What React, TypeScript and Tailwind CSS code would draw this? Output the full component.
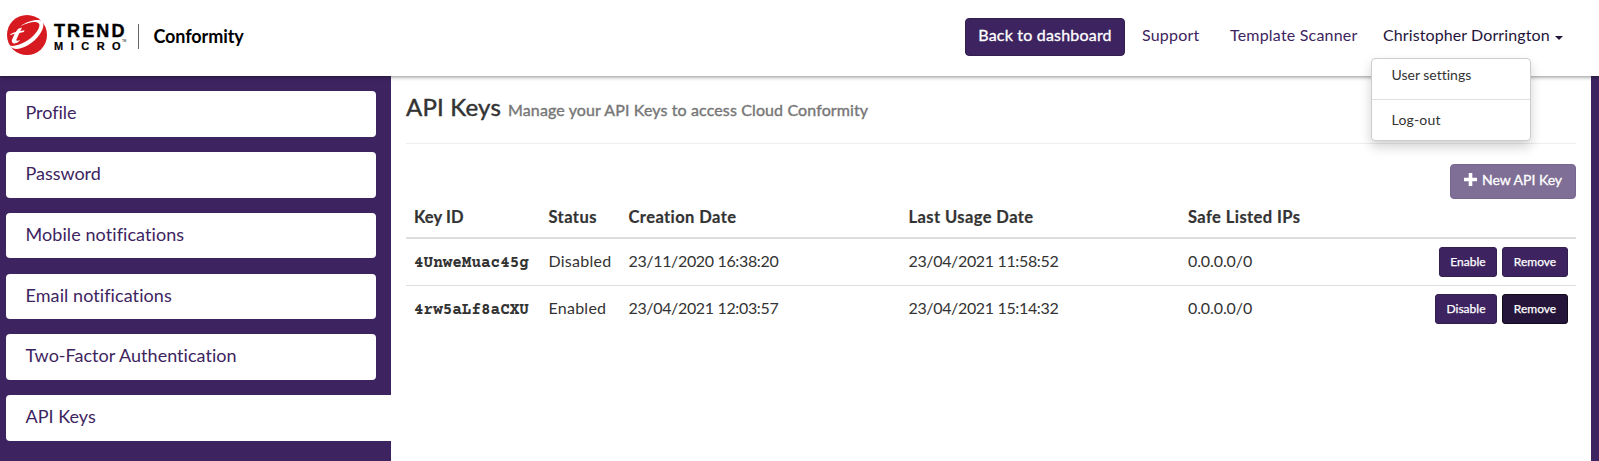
import type { ReactNode } from "react";
import clsx from "clsx";

type NavItem = { label: string; text: string };

const navItems: NavItem[] = [
  { label: "Profile", text: "tracking-[-0.05px]" },
  { label: "Password", text: "tracking-[-0.03px]" },
  { label: "Mobile notifications", text: "tracking-[0.08px]" },
  { label: "Email notifications", text: "tracking-[0.08px]" },
  { label: "Two-Factor Authentication", text: "tracking-[0.03px]" },
  { label: "API Keys", text: "tracking-[0.03px]" },
];

const apiKeys = [
  { id: "4UnweMuac45g", status: "Disabled", created: "23/11/2020 16:38:20", used: "23/04/2021 11:58:52", ips: "0.0.0.0/0" },
  { id: "4rw5aLf8aCXU", status: "Enabled", created: "23/04/2021 12:03:57", used: "23/04/2021 15:14:32", ips: "0.0.0.0/0" },
];

const columns = "grid grid-cols-[134.500px_80px_280px_279.500px_1fr] pl-2 pr-2";

function Logo() {
  return (
    <div className="flex items-center pl-[7px]">
      <svg viewBox="0 0 40 40" className="size-10">
        <circle cx="20" cy="20" r="20" fill="#d71920" />
        <path
          fill="#fff"
          d="M13.5 11.2C19 7 27 4.300 33 5.200C36.500 5.800 37.300 9.500 35.600 14C32.500 22 24 30 14.500 33C9.500 34.600 5 34.300 2.600 30.500C5 31.200 8 31 11.500 29.800C20 27 28.500 20.500 31.600 13.500C33.200 9.800 32.400 7.600 29.500 7.200C25 6.600 19 8.600 13.500 11.200Z"
        />
        <path
          fill="#fff"
          d="M11.200 13.800L15 12.600L13.300 16.100L17.600 15.300L16.800 17L12.400 17.900L9.500 24.300C8.900 26 10.300 26.300 13.300 25.100C11.200 27.800 7.800 29.300 5.800 27.900C4.400 26.900 4.700 25.200 5.500 23.400L7.700 18.800L2.700 20.300C3.900 18.500 6.200 17.600 8.700 17Z"
        />
      </svg>
      <div className="ml-[7px] flex flex-col pt-[4px] font-['Liberation_Sans',Arial,sans-serif] font-bold text-black">
        <span className="h-[17px] text-[18px] leading-[17px] tracking-[2.1px] [-webkit-text-stroke:0.4px_#000]">TREND</span>
        <span className="flex h-[12px] text-[11px] leading-[12px] tracking-[7.5px]">
          <span className="w-[68px] [-webkit-text-stroke:0.2px_#000]">MICRO</span>
          <span className="-mt-[5px] text-[3px] font-normal tracking-normal">TM</span>
        </span>
      </div>
      <div className="ml-[11px] mt-[2px] h-[25px] w-px bg-[#666]" />
      <span className="ml-[15px] mt-[3px] text-[18px] font-bold tracking-[-0.1px] text-black">Conformity</span>
    </div>
  );
}

function SmallButton({ children, dark, className }: { children: ReactNode; dark?: boolean; className: string }) {
  return (
    <button
      className={clsx(
        "h-[30px] rounded-[3px] border pb-[2px] text-[12px] text-white [-webkit-text-stroke:0.25px_#fff]",
        dark ? "border-[#120b1c] bg-[#25153a]" : "border-[#31204e] bg-[#3d2460]",
        className,
      )}
    >
      {children}
    </button>
  );
}

function Header() {
  return (
    <header className="relative z-10 flex h-[76px] items-start bg-white shadow-[0_1px_4px_rgba(0,0,0,0.45)]">
      <div className="flex h-[70px] items-center">
        <Logo />
      </div>
      <nav className="ml-auto mt-[18px] flex h-[38px] items-center text-[16px] text-[#3d2460]">
        <button className="h-[38px] w-[160px] rounded-[4px] border border-[#31204e] bg-[#3d2460] pb-[4px] tracking-[0.2px] text-white [-webkit-text-stroke:0.3px_#fff]">
          Back to dashboard
        </button>
        <a className="ml-[17px] w-[88px] pb-[5px] tracking-[0.2px]">Support</a>
        <a className="w-[153px] pb-[5px] tracking-[0.2px]">Template Scanner</a>
        <div className="relative flex w-[216px] items-center">
          <a className="pb-[5px] tracking-[0.1px] text-[#25153a]">Christopher Dorrington</a>
          <svg viewBox="0 0 8 4" className="ml-[5px] mt-px h-1 w-2">
            <path d="M0 0H8L4 4Z" fill="#25153a" />
          </svg>
          <div className="absolute -left-[12px] top-[35px] w-[160px] rounded-[4px] border border-[#ccc] bg-white text-[14px] leading-5 text-[#333] shadow-[0_6px_12px_rgba(0,0,0,0.175)]">
            <div className="h-[41px] border-b border-[#e0e0e0] pl-[19.500px] pt-[6px]">User settings</div>
            <div className="h-10 pl-[19.500px] pt-[10px] tracking-[0.2px]">Log-out</div>
          </div>
        </div>
      </nav>
    </header>
  );
}

function Sidebar() {
  return (
    <aside className="flex w-[391px] flex-col gap-[15.200px] pl-[6px] pt-[15.200px]">
      {navItems.map(({ label, text }) => (
        <a
          key={label}
          className={clsx(
            "h-[45.600px] bg-white pl-[19.500px] text-[18px] leading-[42px] text-[#3d2460]",
            label === "API Keys" ? "rounded-l-[4px]" : "mr-[15px] rounded-[4px]",
            text,
          )}
        >
          {label}
        </a>
      ))}
    </aside>
  );
}

export default function App() {
  return (
    <div className="flex h-[461px] flex-col overflow-hidden bg-[#3d2460] font-['Lato',sans-serif] text-[#333] [font-variant-ligatures:none]">
      <Header />
      <div className="flex flex-1">
        <Sidebar />
        <main className="mr-2 flex-1 bg-white px-[15px]">
          <div className="flex h-[68px] items-baseline border-b border-[#eee] pt-[15px]">
            <h1 className="text-[24px] leading-8 tracking-[0.2px] [-webkit-text-stroke:0.45px_#333]">API Keys</h1>
            <span className="ml-[7px] text-[16px] tracking-[0.120px] text-[#777] [-webkit-text-stroke:0.4px_#777]">
              Manage your API Keys to access Cloud Conformity
            </span>
          </div>
          <div className="flex justify-end pt-5">
            <button className="flex h-[35px] w-[126px] items-center justify-center rounded-[4px] border border-[#776690] bg-[#7f6f96] pb-[4px] text-[14px] text-white [-webkit-text-stroke:0.3px_#fff]">
              <svg viewBox="0 0 13 13" className="mr-[5px] size-[13px]">
                <path d="M4.700 0h3.600v4.700H13v3.600H8.300V13H4.700V8.300H0V4.700h4.700z" fill="#fff" stroke="none" />
              </svg>
              New API Key
            </button>
          </div>
          <div className={clsx(columns, "h-10 border-b-2 border-[#ddd] pt-[6px] text-[16.500px] font-bold leading-6 tracking-[0.420px] [-webkit-text-stroke:0.2px_#333]")}>
            <span className="tracking-[0.1px]">Key ID</span>
            <span>Status</span>
            <span>Creation Date</span>
            <span>Last Usage Date</span>
            <span>Safe Listed IPs</span>
          </div>
          {apiKeys.map((key, i) => (
            <div key={key.id} className={clsx(columns, "h-[47px] pt-2 text-[16px] leading-[27px]", i === 0 && "border-b border-[#ddd]")}>
              <span className="pt-[3px] font-['Courier_Prime','Liberation_Mono',monospace] font-bold tracking-[-0.02px]">{key.id}</span>
              <span className="tracking-[0.250px]">{key.status}</span>
              <span className="tracking-[-0.350px]">{key.created}</span>
              <span className="tracking-[-0.350px]">{key.used}</span>
              <div className="flex">
                <span className="tracking-[-0.1px]">{key.ips}</span>
                <div className="ml-auto flex gap-[5px]">
                  {key.status === "Disabled" ? (
                    <SmallButton className="w-[58px]">Enable</SmallButton>
                  ) : (
                    <SmallButton className="w-[62px]">Disable</SmallButton>
                  )}
                  <SmallButton dark={i === 1} className="w-[66px]">
                    Remove
                  </SmallButton>
                </div>
              </div>
            </div>
          ))}
        </main>
      </div>
    </div>
  );
}
